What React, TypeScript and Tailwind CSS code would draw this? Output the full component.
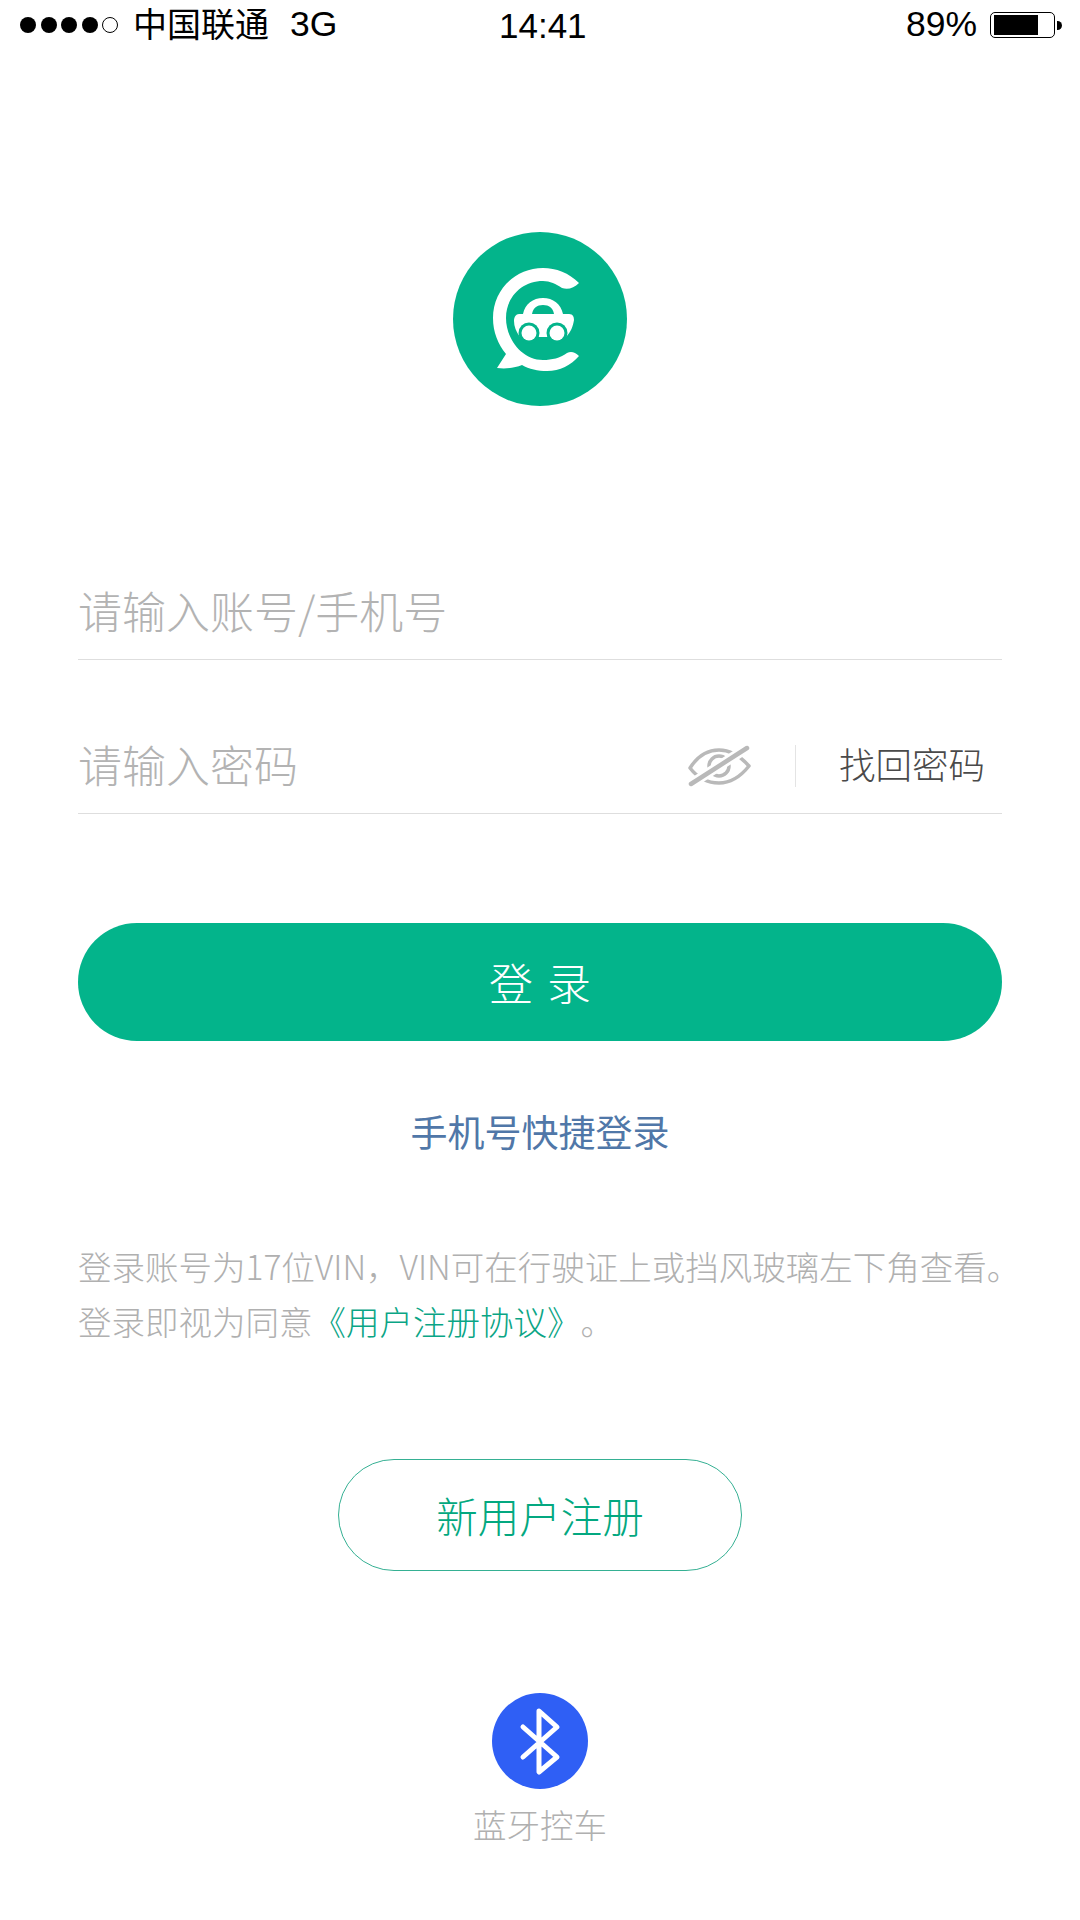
const cjk = "font-['Noto_Sans_CJK_SC',sans-serif]";

function StatusBar() {
  return (
    <div className="relative flex h-[50px] items-center justify-between pl-[20px] pr-[25px] font-['Liberation_Sans','Noto_Sans_CJK_SC',sans-serif] text-[34px] leading-none text-black">
      <div className="flex items-center">
        <div className="flex items-center gap-[4.5px]">
          <span className="size-[16px] rounded-full bg-black" />
          <span className="size-[16px] rounded-full bg-black" />
          <span className="size-[16px] rounded-full bg-black" />
          <span className="size-[16px] rounded-full bg-black" />
          <span className="size-[16px] rounded-full border border-black" />
        </div>
        <span className="ml-[15px]">中国联通</span>
        <span className="ml-[21px] text-[35.5px]">3G</span>
      </div>
      <span className="absolute left-[499px] top-[8px] text-[35px]">14:41</span>
      <div className="flex items-center">
        <span className="text-[35.5px]">89%</span>
        <div className="relative ml-[13px] flex h-[26px] w-[65px] items-center rounded-[5px] border-[1.5px] border-black pl-[2.5px]">
          <div className="h-[20px] w-[44px] bg-black" />
          <div className="absolute right-[-8px] h-[9px] w-[5px] rounded-r-full bg-black" />
        </div>
      </div>
    </div>
  );
}

function Logo() {
  return (
    <div className="flex size-[174px] items-center justify-center rounded-full bg-[#03b48b]">
      <svg viewBox="0 0 174 174" className="size-[174px]">
        <path
          fill="#fff"
          d="M126 51 C116 41 103 36 90 36 C62 36 40 58 40 86 C40 100 45 112 53 122 L44 136 C53 137 62 136 69 133 C76 137 85 139 94 139 C107 139 118 133 126 124 C122 120 118 119 114 121 C107 126 99 128 90 128 C69 128 53 107 53 86 C53 65 69 49 90 49 C97 49 103 52 109 56 C115 58 121 56 126 51 Z"
        />
        <path
          fill="#fff"
          d="M66 82 L70 82 C72 72 80 66 90 66 C100 66 108 72 110 82 L116 82 C120 82 121 85 121 88 C120 94 118 100 113 105 L67 105 C63 100 61 94 61 89 C61 85 63 82 66 82 Z"
        />
        <path fill="#03b48b" d="M79 82 C80 76 84 73 90 73 C96 73 100 76 101 82 Z" />
        <circle cx="76" cy="101" r="10.5" fill="#03b48b" />
        <circle cx="104" cy="101" r="10.5" fill="#03b48b" />
        <circle cx="76" cy="101" r="7.5" fill="#fff" />
        <circle cx="104" cy="101" r="7.5" fill="#fff" />
      </svg>
    </div>
  );
}

function EyeOff() {
  return (
    <svg viewBox="0 0 64 42" className="mt-[4px] h-[42px] w-[64px]" fill="none" stroke="#b9b9b9" strokeWidth="3.5" strokeLinecap="round" strokeLinejoin="round">
      <path d="M3 23 C10 12 20 5 32 5 C44 5 54 12 62 21 C54 31 44 38 32 38 C20 38 10 32 3 23 Z" />
      <circle cx="32" cy="21" r="10" />
      <path d="M4 39 L60 3" stroke="#fff" strokeWidth="10" />
      <path d="M4 39 L60 3" strokeWidth="4.5" />
    </svg>
  );
}

function BluetoothIcon() {
  return (
    <svg viewBox="0 0 96 96" className="size-[96px]" fill="none" stroke="#fff" strokeWidth="5" strokeLinecap="round" strokeLinejoin="round">
      <path d="M31 34 L65 64 L47 79 L47 18 L65 34 L31 64" />
    </svg>
  );
}

export default function App() {
  return (
    <div className={`flex min-h-[1920px] w-[1080px] flex-col bg-white ${cjk} [text-spacing-trim:space-all]`}>
      <StatusBar />
      <div className="mt-[182px] flex justify-center">
        <Logo />
      </div>

      <div className="mx-[78px] mt-[154px] flex h-[100px] items-center border-b border-[#dedede] text-[44px] font-light leading-none text-[#b3b3b3]">
        请输入账号/手机号
      </div>

      <div className="mx-[78px] mt-[54px] flex h-[100px] items-center border-b border-[#dedede] text-[44px] font-light leading-none text-[#b3b3b3]">
        <span className="flex-1">请输入密码</span>
        <EyeOff />
        <div className="ml-[44px] mt-[4px] h-[42px] w-px bg-[#e4e4e4]" />
        <span className="ml-[43px] mr-[17px] mt-[2px] text-[36.5px] text-[#4a4a4a]">找回密码</span>
      </div>

      <button className="mx-[78px] mt-[109px] flex h-[118px] items-center justify-center gap-[14px] rounded-full bg-[#03b48b] text-[44px] font-light text-white">
        <span>登</span>
        <span>录</span>
      </button>

      <div className="mt-[68px] text-center text-[37px] leading-[44px] text-[#5077a8]">手机号快捷登录</div>

      <div className="ml-[78px] mt-[85px] whitespace-nowrap text-[33.5px] font-light leading-[55px] text-[#b0b0b0]">
        <div>登录账号为17位VIN，VIN可在行驶证上或挡风玻璃左下角查看。</div>
        <div>
          登录即视为同意<span className="text-[#0aa585]">《用户注册协议》</span>。
        </div>
      </div>

      <button className="mx-auto mt-[111px] flex h-[112px] w-[404px] items-center justify-center rounded-full border border-[#35b093] text-[41.5px] font-light text-[#03a880]">
        新用户注册
      </button>

      <div className="mt-[122px] flex flex-col items-center">
        <div className="size-[96px] rounded-full bg-[#2f5ff5]">
          <BluetoothIcon />
        </div>
        <span className="mt-[13px] text-[33.5px] font-light leading-[44px] text-[#b0b0b0]">蓝牙控车</span>
      </div>
    </div>
  );
}
